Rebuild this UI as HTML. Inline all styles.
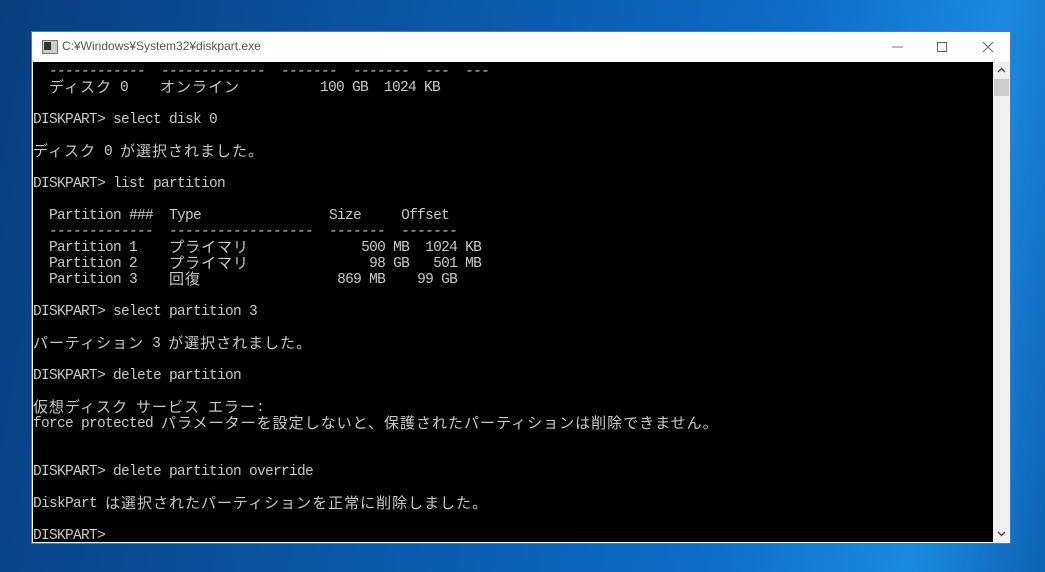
<!DOCTYPE html>
<html><head><meta charset="utf-8"><style>
html,body{margin:0;padding:0;width:1045px;height:572px;overflow:hidden}
body{background:linear-gradient(100deg,#0a3f7e 0%,#0b57a8 40%,#0d6dc8 70%,#1a8ae0 88%,#0e63b5 100%);position:relative}
.win{position:absolute;left:32px;top:32px;width:978px;height:511px;background:#fff;box-shadow:0 0 0 1px #3d7fc4}
.title{position:absolute;left:0;top:0;width:978px;height:30px;background:#fff}
.title .t{position:absolute;left:30px;top:7px;font:12px "Liberation Sans",sans-serif;color:#555}
.icon{position:absolute;left:10px;top:8px;width:14px;height:12px;border:1px solid #777;background:#ccc}
.icon:after{content:"";position:absolute;left:1px;top:1px;width:7px;height:8px;background:#333}
.con{position:absolute;left:1px;top:30px;width:960px;height:480px;background:#000;overflow:hidden}
.sb{position:absolute;left:961px;top:30px;width:17px;height:480px;background:#f0f0f0}
.thumb{position:absolute;left:1px;top:17px;width:15px;height:17px;background:#cdcdcd}
.l{position:absolute;left:0;margin-top:2px;height:16px;white-space:pre;font:14.5px/16px "Liberation Mono","Noto Sans CJK JP",monospace;letter-spacing:-0.7px;color:#c8c8c8}
.j{font-family:"Noto Sans CJK JP",sans-serif;font-size:15px;letter-spacing:1px;line-height:0;position:relative;top:1px}
</style></head><body>
<div class="win">
<div class="title"><div class="icon"></div><div class="t">C:¥Windows¥System32¥diskpart.exe</div>
<svg style="position:absolute;left:860px;top:8px" width="110" height="14"><line x1="0" y1="7" x2="11" y2="7" stroke="#777"/><rect x="45.5" y="2.5" width="9" height="9" fill="none" stroke="#666"/><line x1="91" y1="2" x2="101" y2="12" stroke="#666"/><line x1="101" y1="2" x2="91" y2="12" stroke="#666"/></svg>
</div>
<div class="con">
<div class="l" style="top:0">  ------------  -------------  -------  -------  ---  ---</div>
<div class="l" style="top:16px">  <span class="j">ディスク</span> 0    <span class="j">オンライン</span>          100 GB  1024 KB</div>
<div class="l" style="top:48px">DISKPART&gt; select disk 0</div>
<div class="l" style="top:80px"><span class="j">ディスク</span> 0 <span class="j">が選択されました。</span></div>
<div class="l" style="top:112px">DISKPART&gt; list partition</div>
<div class="l" style="top:144px">  Partition ###  Type                Size     Offset</div>
<div class="l" style="top:160px">  -------------  ------------------  -------  -------</div>
<div class="l" style="top:176px">  Partition 1    <span class="j">プライマリ</span>              500 MB  1024 KB</div>
<div class="l" style="top:192px">  Partition 2    <span class="j">プライマリ</span>               98 GB   501 MB</div>
<div class="l" style="top:208px">  Partition 3    <span class="j">回復</span>                 869 MB    99 GB</div>
<div class="l" style="top:240px">DISKPART&gt; select partition 3</div>
<div class="l" style="top:272px"><span class="j">パーティション</span> 3 <span class="j">が選択されました。</span></div>
<div class="l" style="top:304px">DISKPART&gt; delete partition</div>
<div class="l" style="top:336px"><span class="j">仮想ディスク</span> <span class="j">サービス</span> <span class="j">エラー</span>:</div>
<div class="l" style="top:352px">force protected <span class="j">パラメーターを設定しないと、保護されたパーティションは削除できません。</span></div>
<div class="l" style="top:400px">DISKPART&gt; delete partition override</div>
<div class="l" style="top:432px">DiskPart <span class="j">は選択されたパーティションを正常に削除しました。</span></div>
<div class="l" style="top:464px">DISKPART&gt;</div>
</div>
<div class="sb"><div class="thumb"></div>
<svg style="position:absolute;left:4px;top:5px" width="9" height="6"><path d="M1 5 L4.5 1.5 L8 5" fill="none" stroke="#555" stroke-width="1.5"/></svg>
<svg style="position:absolute;left:4px;top:469px" width="9" height="6"><path d="M1 1 L4.5 4.5 L8 1" fill="none" stroke="#555" stroke-width="1.5"/></svg>
</div>
</div>
</body></html>
